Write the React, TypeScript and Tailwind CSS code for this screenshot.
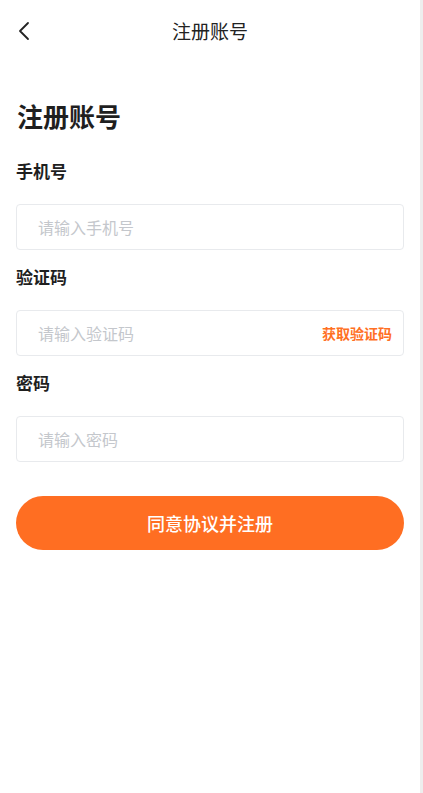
import React from 'react';

const font = { fontFamily: '"Noto Sans CJK SC", "Noto Sans", sans-serif' };

const Field: React.FC<{ label: string; placeholder: string; extra?: React.ReactNode; first?: boolean }> = ({ label, placeholder, extra, first }) => (
  <div className={first ? 'mt-[25px]' : 'mt-[15px]'}>
    <div className="h-[24px] text-[17px] leading-[24px] font-semibold text-[#1f1f1f]">{label}</div>
    <div className="mt-[21px] h-[46px] flex items-center justify-between border border-[#e8eaed] rounded-[4px] pl-[21px] pr-[11px]">
      <span className="text-[16px] text-[#c4c7cc]">{placeholder}</span>
      {extra}
    </div>
  </div>
);

export default function App() {
  return (
    <div className="flex w-[423px] h-[793px] bg-white" style={font}>
      <div className="flex-1 flex flex-col">
        <div className="relative h-[62px] flex items-center justify-center">
          <svg className="absolute left-[16px] top-[21px]" width="16" height="20" viewBox="0 0 16 20" fill="none">
            <polyline points="12,2 4,10 12,18" stroke="#222" strokeWidth="1.8" strokeLinecap="round" strokeLinejoin="round" />
          </svg>
          <span className="text-[19px] text-[#222]">注册账号</span>
        </div>
        <div className="px-[16px]">
          <h1 className="mt-[36px] text-[26px] leading-[36px] font-bold text-[#1f1f1f] pl-[1px]">注册账号</h1>
          <Field first label="手机号" placeholder="请输入手机号" />
          <Field
            label="验证码"
            placeholder="请输入验证码"
            extra={<span className="text-[14px] font-bold text-[#ff7024]">获取验证码</span>}
          />
          <Field label="密码" placeholder="请输入密码" />
          <button className="mt-[34px] w-full h-[54px] rounded-full bg-[#ff6e22] text-white text-[18px] font-medium">
            同意协议并注册
          </button>
        </div>
      </div>
      <div className="w-[3px] bg-[#eeeeee]" />
    </div>
  );
}
